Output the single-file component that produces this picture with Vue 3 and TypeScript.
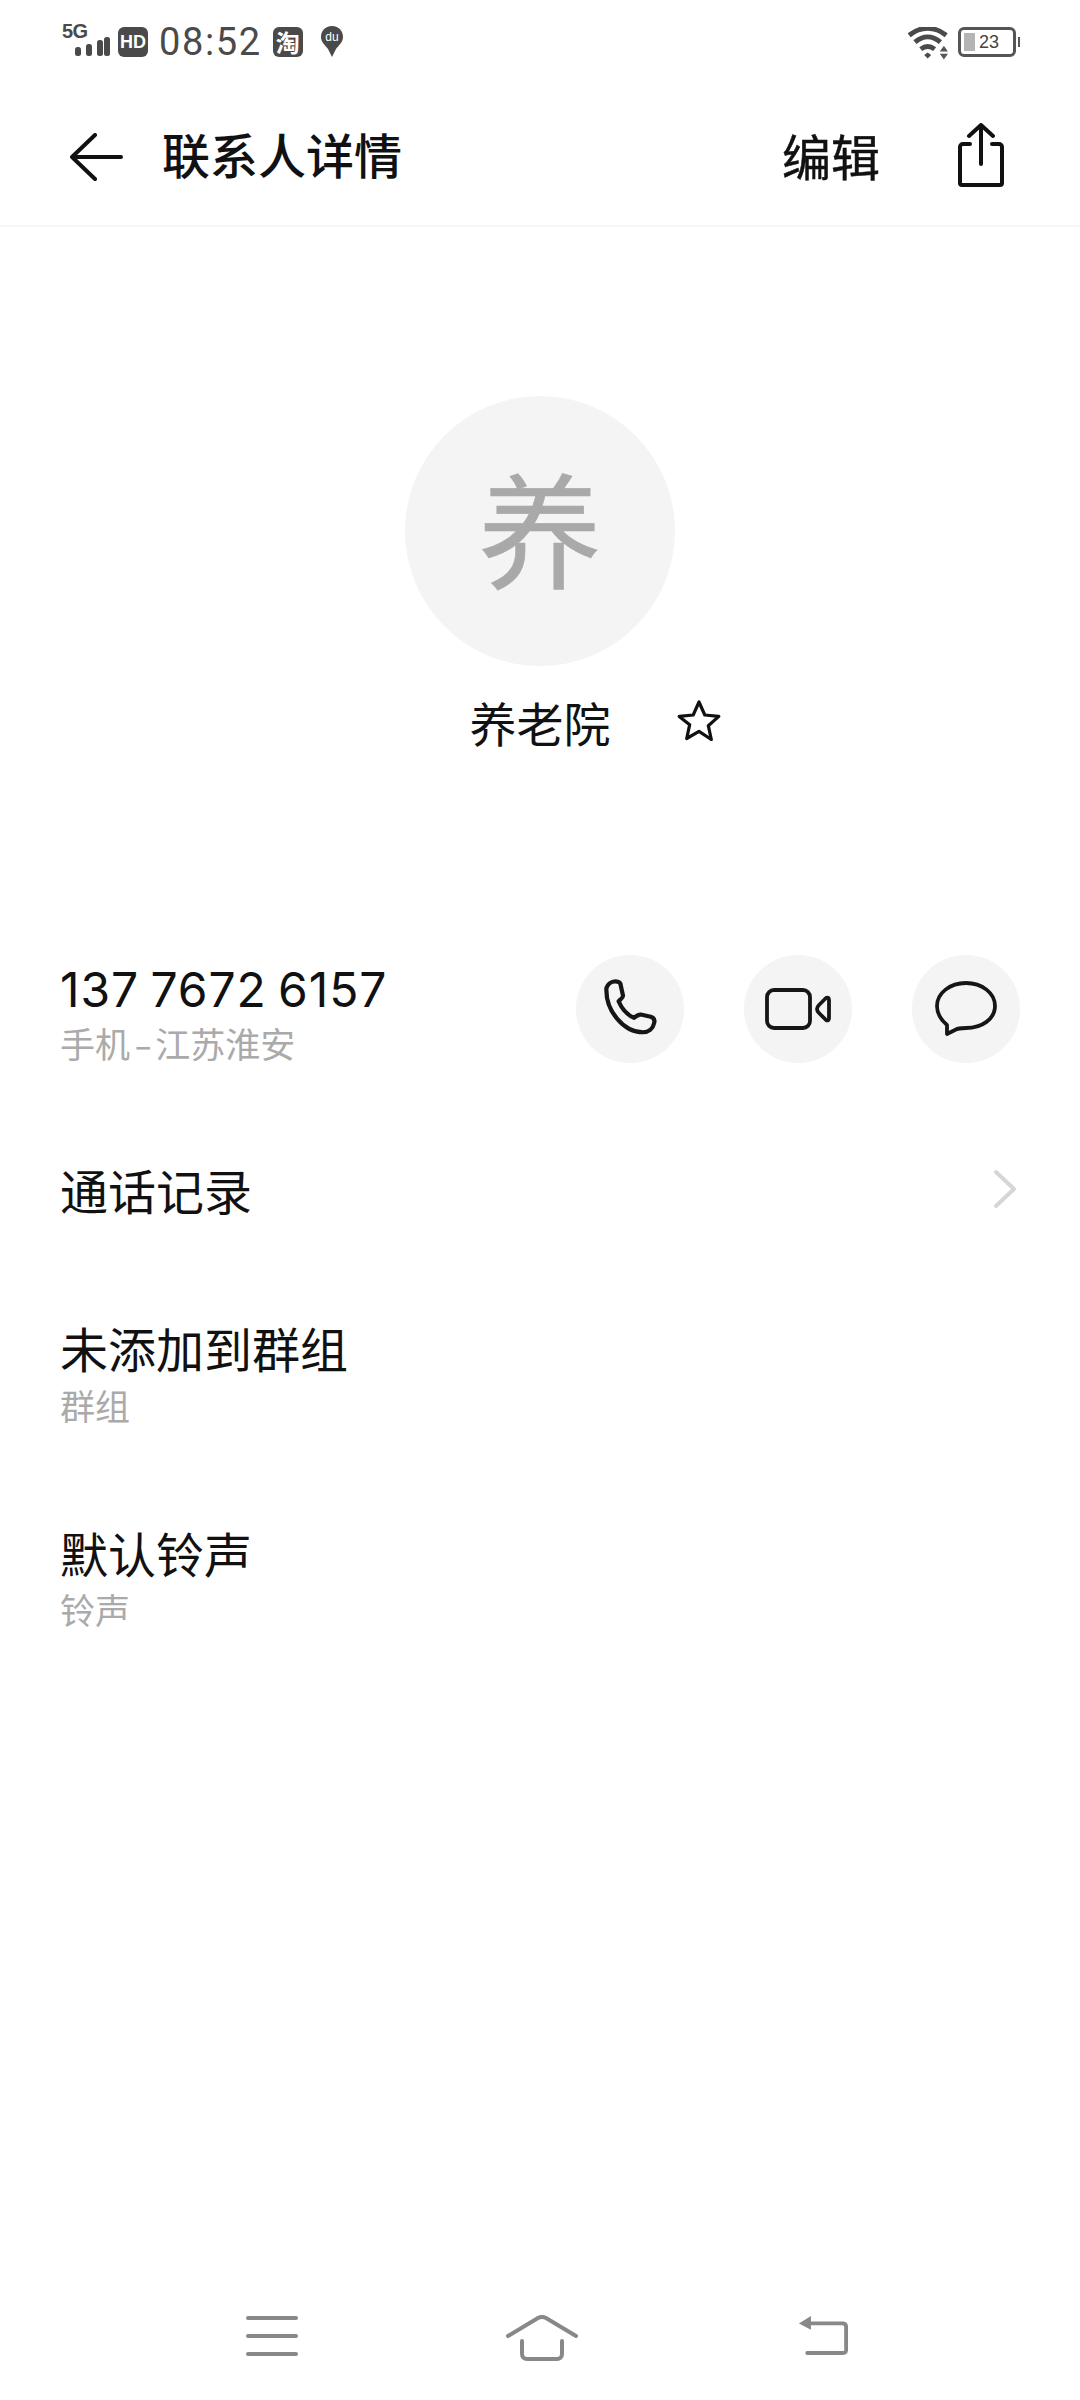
<script setup lang="ts">
const actions = ['phone', 'video', 'message'] as const
</script>

<template>
  <div class="page">
    <div class="status">
      <div class="status-left">
        <svg class="sig" width="48" height="42" viewBox="0 0 48 42">
          <text x="0" y="20" class="five">5G</text>
          <rect x="13" y="29" width="6" height="9" rx="2.5" />
          <rect x="24" y="26" width="6" height="12" rx="2.5" />
          <rect x="35" y="22" width="6" height="16" rx="2.5" />
          <rect x="42" y="19" width="6" height="19" rx="2.5" />
        </svg>
        <span class="chip hd">HD</span>
        <span class="time">08:52</span>
        <span class="chip tao">淘</span>
        <svg class="pin" width="24" height="32" viewBox="0 0 24 32">
          <path d="M12 0C5 0 1 5 1 11c0 5 4 8 7 12l4 8 4-8c3-4 7-7 7-12C23 5 19 0 12 0z" fill="#4a4a4a" />
          <text x="12" y="15" class="du">du</text>
        </svg>
      </div>
      <div class="status-right">
        <svg class="wifi" width="44" height="35" viewBox="0 0 38 30" fill="none" stroke="#4a4a4a" stroke-width="4.2">
          <path d="M1 7c10-8 22-8 32 0" />
          <path d="M6 13c7-6 15-6 22 0" />
          <path d="M11 19c4-3 8-3 12 0" />
          <path d="M14 24l3-2 3 2-3 3z" fill="#4a4a4a" stroke="none" />
          <path d="M31 16l3.500 5h-7zM27.500 23h7l-3.500 5z" fill="#555" stroke="none" />
        </svg>
        <div class="battery">
          <span class="level"></span>
          <span class="num">23</span>
        </div>
        <span class="tip"></span>
      </div>
    </div>

    <header class="bar">
      <svg class="back" width="54" height="48" viewBox="0 0 54 48" fill="none" stroke="#111" stroke-width="4" stroke-linecap="round" stroke-linejoin="round">
        <path d="M25 2 2 24l23 22M2 24h49" />
      </svg>
      <h1 class="title">联系人详情</h1>
      <span class="edit">编辑</span>
      <svg class="share" width="46" height="64" viewBox="0 0 46 64" fill="none" stroke="#111" stroke-width="4" stroke-linecap="round" stroke-linejoin="round">
        <path d="M12 21H5a3 3 0 0 0-3 3v36a2 2 0 0 0 2 2h38a2 2 0 0 0 2-2V24a3 3 0 0 0-3-3h-7" />
        <path d="M23 41V3M11 13 23 2l12 11" />
      </svg>
    </header>

    <section class="profile">
      <div class="avatar">养</div>
      <div class="name-row">
        <span class="name">养老院</span>
        <svg class="star" width="44" height="44" viewBox="0 0 44 44" fill="none" stroke="#111" stroke-width="3.200" stroke-linejoin="round">
          <path d="M22 3l5.800 13 14 1.400-10.500 9.300 3 13.800L22 32.400 9.700 39.500l3-13.800L2.200 17.400l14-1.400z" />
        </svg>
      </div>
    </section>

    <section class="phone-row">
      <div class="phone-text">
        <div class="number">137 7672 6157</div>
        <div class="sub">手机<span class="dash">-</span>江苏淮安</div>
      </div>
      <div class="actions">
        <button v-for="a in actions" :key="a" class="round" type="button">
          <svg v-if="a === 'phone'" class="handset" width="62" height="62" viewBox="0 0 56 56" fill="none" stroke="#161616" stroke-width="3.800" stroke-linejoin="round">
            <path d="M4 9c1-3 4-6 8-6 3 0 5 1 5 4l2 9c0 2-2 3-4 5 3 7 7 12 14 15 2-2 3-3 6-3l9 2c3 1 4 3 3 6-1 5-5 8-10 8C20 49 3 30 4 9z" />
          </svg>
          <svg v-else-if="a === 'video'" width="66" height="42" viewBox="0 0 66 42" fill="none" stroke="#161616" stroke-width="3.800" stroke-linejoin="round">
            <rect x="2" y="2" width="43" height="38" rx="7" />
            <path d="M52 21c0-2 1-3 2-4l7-7c2-1 3 0 3 2v18c0 2-1 3-3 2l-7-7c-1-1-2-2-2-4z" />
          </svg>
          <svg v-else width="62" height="56" viewBox="0 0 62 56" fill="none" stroke="#161616" stroke-width="3.800" stroke-linejoin="round">
            <path d="M31 2c16 0 29 10 29 23S47 47 31 47c-4 0-8 0-11 2L12 53l0-9C6 39 2 32 2 25 2 12 15 2 31 2z" />
          </svg>
        </button>
      </div>
    </section>

    <section class="row calls">
      <div class="main">通话记录</div>
      <svg class="chev" width="26" height="42" viewBox="0 0 26 42" fill="none" stroke="#d6d6d6" stroke-width="4" stroke-linecap="round" stroke-linejoin="round">
        <path d="M5 4l18 17L5 38" />
      </svg>
    </section>

    <section class="row group">
      <div>
        <div class="main">未添加到群组</div>
        <div class="sub">群组</div>
      </div>
    </section>

    <section class="row ring">
      <div>
        <div class="main">默认铃声</div>
        <div class="sub">铃声</div>
      </div>
    </section>

    <nav class="nav">
      <svg width="52" height="42" viewBox="0 0 52 42" fill="none" stroke="#888" stroke-width="4" stroke-linecap="round">
        <path d="M2 3h48M2 21h48M2 39h48" />
      </svg>
      <svg class="home" width="72" height="46" viewBox="0 0 72 46" fill="none" stroke="#888" stroke-width="4" stroke-linecap="round" stroke-linejoin="round">
        <path d="M2 21 32 3c3-1.500 5-1.500 8 0l30 18" />
        <path d="M16 26v13c0 3 2 5 5 5h30c3 0 5-2 5-5V26" />
      </svg>
      <svg class="ret" width="50" height="41" viewBox="0 0 54 44" fill="none" stroke="#888" stroke-width="4.200" stroke-linecap="round" stroke-linejoin="round">
        <path d="M10 10h38c3 0 4 2 4 4v24c0 3-1 4-4 4H10" />
        <path d="M14 2v15L1 10z" fill="#888" stroke="none" />
      </svg>
    </nav>
  </div>
</template>

<style>
html, body { margin: 0; background: #fff; }
</style>

<style scoped>
.page {
  width: 1080px;
  height: 2400px;
  background: #fff;
  display: flex;
  flex-direction: column;
  font-family: "Noto Sans CJK SC", "Liberation Sans", sans-serif;
  color: #111;
  overflow: hidden;
}
.status {
  height: 84px;
  padding: 0 60px 0 62px;
  display: flex;
  align-items: center;
  justify-content: space-between;
  color: #4a4a4a;
}
.status-left, .status-right { display: flex; align-items: center; }
.sig { fill: #4a4a4a; margin-top: -10px; margin-bottom: -4px; }
.five { font: bold 20px "Liberation Sans", sans-serif; letter-spacing: -0.5px; }
.chip {
  width: 30px;
  height: 30px;
  background: #4a4a4a;
  color: #fff;
  border-radius: 6px;
  display: flex;
  align-items: center;
  justify-content: center;
  line-height: 1;
}
.hd { margin-left: 8px; font: bold 18px "Liberation Sans", sans-serif; }
.time {
  margin-left: 11px;
  font: 38px/1 "Roboto", sans-serif;
  letter-spacing: 1.6px;
}
.tao { margin-left: 11px; font-size: 24px; font-weight: 700; }
.pin { margin-left: 17px; }
.du { fill: #fff; font: 12px "Liberation Sans", sans-serif; text-anchor: middle; }
.wifi { margin-right: 6px; margin-top: 4px; }
.battery {
  position: relative;
  width: 52px;
  height: 24px;
  border: 3px solid #555;
  border-radius: 6px;
  display: flex;
  align-items: center;
  box-sizing: content-box;
  padding: 0;
}
.level { width: 11px; height: 18px; margin-left: 3px; background: #b4b4b4; }
.num { margin-left: 4px; font: 18px/1 "Liberation Sans", sans-serif; color: #444; }
.tip { width: 2px; height: 10px; margin-left: 2px; background: #555; }
.bar {
  height: 143px;
  box-sizing: border-box;
  padding: 0 76px 0 70px;
  display: flex;
  align-items: center;
  border-bottom: 2px solid #f5f5f5;
}
.back { flex: none; margin-top: 4px; }
.title { margin: 0 0 4px 38px; font-size: 48px; font-weight: 500; line-height: 1; flex: 1; }
.edit { font-size: 49px; line-height: 1; margin-right: 78px; -webkit-text-stroke: 0.5px #111; }
.share { flex: none; }
.profile {
  padding-top: 169px;
  display: flex;
  flex-direction: column;
  align-items: center;
}
.avatar {
  width: 270px;
  height: 270px;
  border-radius: 50%;
  background: #f4f4f4;
  color: #a9a9a9;
  font-size: 124px;
  line-height: 258px;
  text-align: center;
  -webkit-text-stroke: 0.6px #a9a9a9;
}
.name-row { margin-top: 28px; display: flex; align-items: center; margin-left: 110px; height: 54px; }
.name { font-size: 47px; line-height: 1; }
.star { margin-left: 66px; margin-top: 0; }
.phone-row {
  margin-top: 207px;
  padding: 0 60px 0 60px;
  display: flex;
  justify-content: space-between;
  align-items: center;
}
.phone-text { padding-top: 3px; }
.number { font: 48px/1 "Inter", sans-serif; letter-spacing: 0.9px; color: #111; margin-top: 4px; word-spacing: -3px; }
.sub { font-size: 35px; line-height: 1; color: #aaa; margin-top: 16px; }
.phone-text .sub { margin-top: 11px; }
.dash { display: inline-block; margin: 0 6.5px; transform: scaleX(1.5); }
.actions { display: flex; gap: 60px; }
.round {
  width: 108px;
  height: 108px;
  border: 0;
  padding: 0;
  border-radius: 50%;
  background: #f4f4f4;
  display: flex;
  align-items: center;
  justify-content: center;
}
.handset { margin-left: 5px; }
.row { padding: 0 60px; display: flex; align-items: center; justify-content: space-between; }
.main { font-size: 48px; line-height: 1; color: #111; }
.calls { margin-top: 102px; }
.chev { margin-right: 3px; }
.group { margin-top: 110px; }
.ring { margin-top: 106px; }
.ring .sub { margin-top: 15px; }
.nav {
  margin-top: auto;
  height: 85px;
  padding: 0 0 0 246px;
  display: flex;
  align-items: flex-start;
}
.home { margin-left: 208px; }
.ret { margin-left: 220px; margin-top: -1px; }
</style>
